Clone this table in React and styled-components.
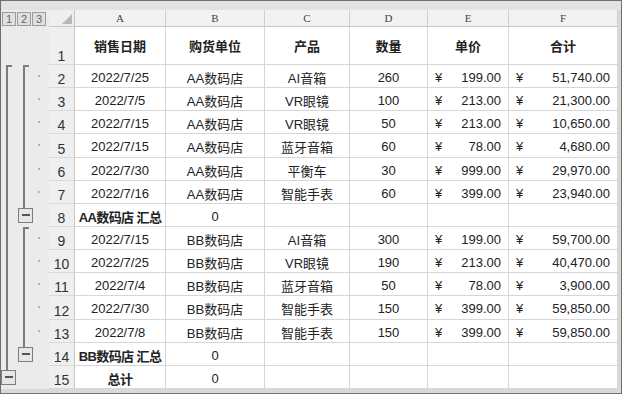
import React from "react";
import styled, { createGlobalStyle } from "styled-components";

const COLS = "48px 26px 91px 99px 85px 78px 81px 109px";
const LINE = "#d6d6d6";

const GlobalStyle = createGlobalStyle`
  html, body {
    margin: 0;
    padding: 0;
    background: #ffffff;
  }
  * {
    box-sizing: border-box;
  }
`;

const rows = [
  { n: 2, lv1: "start", lv2: "start", dot: true, d: ["2022/7/25", "AA数码店", "AI音箱", "260", "199.00", "51,740.00"] },
  { n: 3, lv1: "line", lv2: "line", dot: true, d: ["2022/7/5", "AA数码店", "VR眼镜", "100", "213.00", "21,300.00"] },
  { n: 4, lv1: "line", lv2: "line", dot: true, d: ["2022/7/15", "AA数码店", "VR眼镜", "50", "213.00", "10,650.00"] },
  { n: 5, lv1: "line", lv2: "line", dot: true, d: ["2022/7/15", "AA数码店", "蓝牙音箱", "60", "78.00", "4,680.00"] },
  { n: 6, lv1: "line", lv2: "line", dot: true, d: ["2022/7/30", "AA数码店", "平衡车", "30", "999.00", "29,970.00"] },
  { n: 7, lv1: "line", lv2: "line", dot: true, d: ["2022/7/16", "AA数码店", "智能手表", "60", "399.00", "23,940.00"] },
  { n: 8, lv1: "line", lv2: "button", total: "AA数码店 汇总" },
  { n: 9, lv1: "line", lv2: "start", dot: true, d: ["2022/7/15", "BB数码店", "AI音箱", "300", "199.00", "59,700.00"] },
  { n: 10, lv1: "line", lv2: "line", dot: true, d: ["2022/7/25", "BB数码店", "VR眼镜", "190", "213.00", "40,470.00"] },
  { n: 11, lv1: "line", lv2: "line", dot: true, d: ["2022/7/4", "BB数码店", "蓝牙音箱", "50", "78.00", "3,900.00"] },
  { n: 12, lv1: "line", lv2: "line", dot: true, d: ["2022/7/30", "BB数码店", "智能手表", "150", "399.00", "59,850.00"] },
  { n: 13, lv1: "line", lv2: "line", dot: true, d: ["2022/7/8", "BB数码店", "智能手表", "150", "399.00", "59,850.00"] },
  { n: 14, lv1: "line", lv2: "button", total: "BB数码店 汇总" },
  { n: 15, lv1: "button", lv2: "none", total: "总计" },
];

const Frame = styled.div`
  width: 622px;
  height: 394px;
  border: 1px solid #6f6f6f;
  background: #d9d9d9;
  padding: 0 3px 4px 0;
  display: flex;
  flex-direction: column;
  font-family: "Liberation Sans", "Noto Sans CJK SC", sans-serif;
`;

const TopBand = styled.div`
  height: 9px;
  background: #e2e2e2;
  margin-right: -3px;
`;

const Sheet = styled.div`
  display: flex;
  flex-direction: column;
  background: #ffffff;
`;

const Row = styled.div`
  display: grid;
  grid-template-columns: ${COLS};
  height: ${(p) => p.$h}px;
`;

const Outline = styled.div`
  display: flex;
  background: #ebebeb;
  padding-left: ${(p) => (p.$head ? 1 : 0)}px;
  gap: ${(p) => (p.$head ? 1 : 0)}px;
  padding-top: ${(p) => (p.$head ? 2 : 0)}px;
`;

const LevelBtn = styled.div`
  width: 14px;
  height: 14px;
  border: 1px solid #9c9c9c;
  background: #e0e0e0;
  color: #666666;
  font-size: 11px;
  line-height: 12px;
  text-align: center;
`;

const Lane = styled.div`
  position: relative;
  width: ${(p) => p.$w}px;
  flex: none;
`;

const VLine = styled.div`
  position: absolute;
  left: 5px;
  top: 0;
  width: 2px;
  height: ${(p) => p.$h || "100%"};
  background: #7c7c7c;
`;

const Tick = styled.div`
  position: absolute;
  left: 5px;
  top: 0;
  width: 6px;
  height: 2px;
  background: #7c7c7c;
`;

const MinusBtn = styled.div`
  position: absolute;
  left: ${(p) => p.$left}px;
  top: ${(p) => p.$top}px;
  width: 15px;
  height: 15px;
  border: 1px solid #7d7d7d;
  background: #e6e6e6;
  display: flex;
  align-items: center;
  justify-content: center;

  &::after {
    content: "";
    width: 8px;
    height: 2px;
    background: #555555;
  }
`;

const Dot = styled.div`
  position: absolute;
  left: 5px;
  top: 10px;
  width: 2px;
  height: 2px;
  background: #b3b3b3;
`;

const Corner = styled.div`
  background: #efefef;
  border-right: 1px solid #c6c6c6;
  border-bottom: 1px solid #c6c6c6;
  display: flex;
  align-items: flex-end;
  justify-content: flex-end;
  padding: 0 2px 2px 0;
`;

const ColHead = styled.div`
  background: #f2f2f2;
  border-right: 1px solid #cfcfcf;
  border-bottom: 1px solid #c6c6c6;
  display: flex;
  align-items: center;
  justify-content: center;
  font-family: "Liberation Serif", serif;
  font-size: 11px;
  color: #444444;
`;

const RowNum = styled.div`
  background: #efefef;
  border-right: 1px solid #c6c6c6;
  border-bottom: 1px solid #d9d9d9;
  display: flex;
  align-items: flex-end;
  justify-content: center;
  font-size: 14px;
  line-height: 16px;
  color: #333333;
`;

const Cell = styled.div`
  border-right: 1px solid ${LINE};
  border-bottom: 1px solid ${LINE};
  display: flex;
  align-items: center;
  justify-content: ${(p) => p.$justify || "center"};
  padding: ${(p) => (p.$bold && p.$head ? "0 4px" : "3px 7px 0")};
  font-size: 13px;
  font-weight: ${(p) => (p.$bold ? 700 : 400)};
  letter-spacing: ${(p) => (p.$tight ? "-0.6px" : "normal")};
  color: #222222;
  white-space: nowrap;
  overflow: visible;
  position: relative;
  z-index: ${(p) => (p.$tight ? 1 : 0)};
`;

const Currency = ({ value }) => (
  <Cell $justify="space-between">
    <span>¥</span>
    <span>{value}</span>
  </Cell>
);

const OutlineLane = ({ kind, w, btnLeft }) => (
  <Lane $w={w}>
    {kind === "start" && (
      <>
        <Tick />
        <VLine />
      </>
    )}
    {kind === "line" && <VLine />}
    {kind === "button" && (
      <>
        <VLine $h="4px" />
        <MinusBtn $left={btnLeft} $top={4} />
      </>
    )}
  </Lane>
);

const Triangle = () => (
  <svg width="10" height="10" viewBox="0 0 10 10">
    <polygon points="10,0 10,10 0,10" fill="#b9b9b9" />
  </svg>
);

export default function App() {
  const rowH = 324 / 14;
  return (
    <>
      <GlobalStyle />
      <Frame>
        <TopBand />
        <Sheet>
          <Row $h={17}>
            <Outline $head>
              <LevelBtn>1</LevelBtn>
              <LevelBtn>2</LevelBtn>
              <LevelBtn>3</LevelBtn>
            </Outline>
            <Corner>
              <Triangle />
            </Corner>
            {["A", "B", "C", "D", "E", "F"].map((c) => (
              <ColHead key={c}>{c}</ColHead>
            ))}
          </Row>
          <Row $h={38}>
            <Outline />
            <RowNum>1</RowNum>
            {["销售日期", "购货单位", "产品", "数量", "单价", "合计"].map((t) => (
              <Cell key={t} $bold $head>
                {t}
              </Cell>
            ))}
          </Row>
          {rows.map((r) => (
            <Row key={r.n} $h={rowH}>
              <Outline>
                <OutlineLane kind={r.lv1} w={17} btnLeft={0} />
                <OutlineLane kind={r.lv2} w={15} btnLeft={0} />
                <Lane $w={16}>{r.dot && <Dot />}</Lane>
              </Outline>
              <RowNum>{r.n}</RowNum>
              {r.d ? (
                <>
                  <Cell>{r.d[0]}</Cell>
                  <Cell>{r.d[1]}</Cell>
                  <Cell>{r.d[2]}</Cell>
                  <Cell>{r.d[3]}</Cell>
                  <Currency value={r.d[4]} />
                  <Currency value={r.d[5]} />
                </>
              ) : (
                <>
                  <Cell $bold $tight>
                    {r.total}
                  </Cell>
                  <Cell>0</Cell>
                  <Cell />
                  <Cell />
                  <Cell />
                  <Cell />
                </>
              )}
            </Row>
          ))}
        </Sheet>
      </Frame>
    </>
  );
}
